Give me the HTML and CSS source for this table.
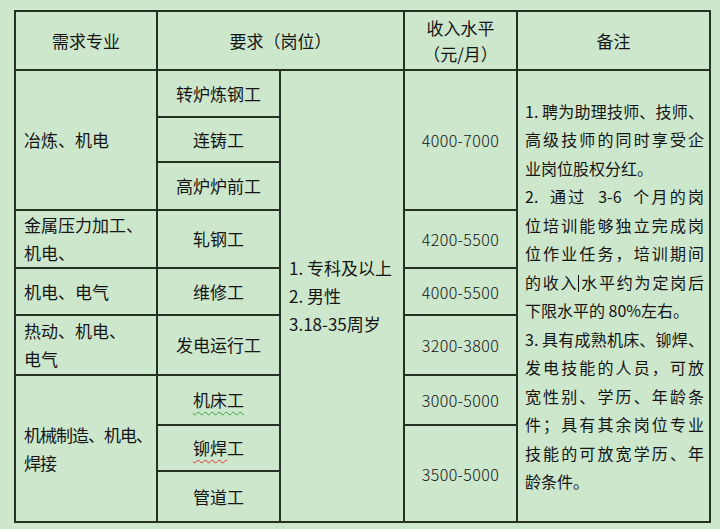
FILE: index.html
```html
<!DOCTYPE html>
<html lang="zh-CN">
<head>
<meta charset="utf-8">
<link rel="stylesheet" href="styles.css">
</head>
<body>
<table class="grid">
  <colgroup>
    <col class="c1"><col class="c2"><col class="c3"><col class="c4"><col class="c5">
  </colgroup>
  <tr class="r-head">
    <th>需求专业</th>
    <th colspan="2">要求（岗位）</th>
    <th>收入水平<br>（元/月）</th>
    <th>备注</th>
  </tr>
  <tr class="r1">
    <td class="major" rowspan="3">冶炼、机电</td>
    <td class="job">转炉炼钢工</td>
    <td class="req" rowspan="9">1.&nbsp;专科及以上<br>2.&nbsp;男性<br>3.18-35周岁</td>
    <td class="pay" rowspan="3">4000-7000</td>
    <td class="note" rowspan="9">
      <span class="ln">1.&nbsp;聘为助理技师、技师、</span>
      <span class="ln">高级技师的同时享受企</span>
      <span class="ln last">业岗位股权分红。</span>
      <span class="ln">2.&nbsp;&nbsp;通过&nbsp;&nbsp;3-6&nbsp;&nbsp;个月的岗</span>
      <span class="ln">位培训能够独立完成岗</span>
      <span class="ln">位作业任务，培训期间</span>
      <span class="ln">的收入<i class="caret"></i>水平约为定岗后</span>
      <span class="ln last">下限水平的&nbsp;80%左右。</span>
      <span class="ln">3.&nbsp;具有成熟机床、铆焊、</span>
      <span class="ln">发电技能的人员，可放</span>
      <span class="ln">宽性别、学历、年龄条</span>
      <span class="ln">件；具有其余岗位专业</span>
      <span class="ln">技能的可放宽学历、年</span>
      <span class="ln last">龄条件。</span>
    </td>
  </tr>
  <tr class="r2"><td class="job">连铸工</td></tr>
  <tr class="r3"><td class="job">高炉炉前工</td></tr>
  <tr class="r4">
    <td class="major">金属压力加工、<br>机电、</td>
    <td class="job">轧钢工</td>
    <td class="pay">4200-5500</td>
  </tr>
  <tr class="r5">
    <td class="major">机电、电气</td>
    <td class="job">维修工</td>
    <td class="pay">4000-5500</td>
  </tr>
  <tr class="r6">
    <td class="major">热动、机电、<br>电气</td>
    <td class="job">发电运行工</td>
    <td class="pay">3200-3800</td>
  </tr>
  <tr class="r7">
    <td class="major tight" rowspan="3">机械制造、机电、<br>焊接</td>
    <td class="job"><span class="sq-green">机床工</span></td>
    <td class="pay">3000-5000</td>
  </tr>
  <tr class="r8">
    <td class="job"><span class="sq-red">铆焊</span>工</td>
    <td class="pay" rowspan="2">3500-5000</td>
  </tr>
  <tr class="r9"><td class="job">管道工</td></tr>
</table>
</body>
</html>
```

FILE: styles.css
```css
html, body {
  margin: 0;
  padding: 0;
  background: #cde7cd;
}
body {
  padding: 10px 0 0 14px;
  font-family: "Noto Sans CJK SC", "Noto Sans", sans-serif;
  font-size: 17px;
  color: #151515;
}
.grid {
  border-collapse: collapse;
  table-layout: fixed;
  width: 695px;
  border: 2px solid #243224;
}
.c1 { width: 142px; }
.c2 { width: 123px; }
.c3 { width: 124px; }
.c4 { width: 113px; }
.c5 { width: 193px; }
.grid th, .grid td {
  border: 2px solid #243224;
  padding: 0;
  vertical-align: middle;
  line-height: 28px;
  white-space: nowrap;
}
.grid th {
  font-weight: normal;
  text-align: center;
  line-height: 26px;
}
.r-head { height: 59px; }
.r1 { height: 47px; }
.r2 { height: 45px; }
.r3 { height: 48px; }
.r4 { height: 57px; }
.r5 { height: 47px; }
.r6 { height: 60px; }
.r7 { height: 50px; }
.r8 { height: 46px; }
.r9 { height: 51px; }
.major {
  text-align: left;
  padding-left: 8px !important;
}
.major.tight {
  letter-spacing: -1px;
}
.job, .pay {
  text-align: center;
}
.pay {
  font-size: 16px;
  font-weight: 300;
  letter-spacing: 0.4px;
}
.req {
  text-align: left;
  padding-left: 8px !important;
}
.note {
  font-size: 16px;
  padding: 0 5px 0 7px !important;
}
.ln {
  display: block;
  line-height: 28.5px;
  text-align: justify;
  text-align-last: justify;
}
.ln.last {
  text-align-last: left;
}
.caret {
  display: inline-block;
  width: 0;
  height: 17px;
  border-left: 1.5px solid #111;
  vertical-align: -3px;
}
.sq-green {
  text-decoration: underline wavy #3aa03a;
  text-decoration-thickness: 1px;
  text-underline-offset: 4px;
}
.sq-red {
  text-decoration: underline wavy #e03030;
  text-decoration-thickness: 1px;
  text-underline-offset: 4px;
}
```
